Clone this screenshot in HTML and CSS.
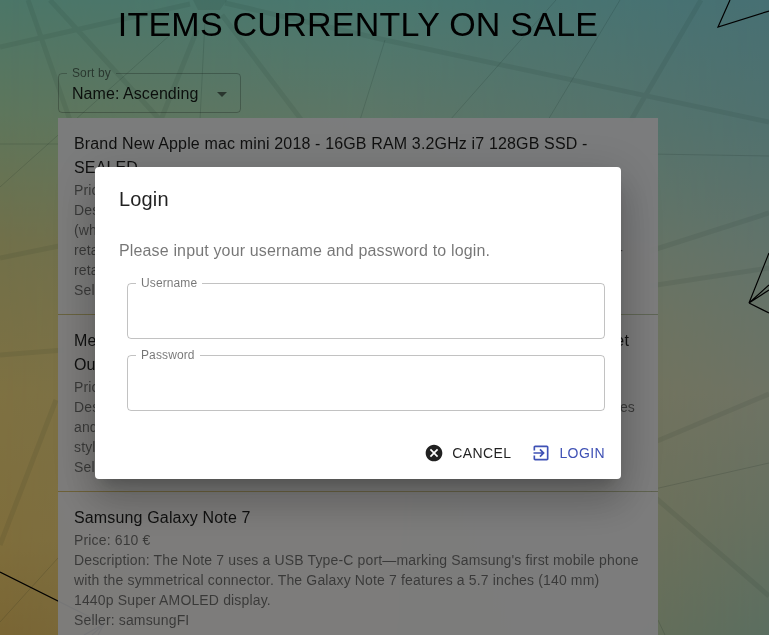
FILE: index.html
```html
<!DOCTYPE html>
<html lang="en">
<head>
<meta charset="utf-8">
<title>Items currently on sale</title>
<link rel="stylesheet" href="styles.css">
</head>
<body>
<svg class="wallpaper" viewBox="0 0 769 635" preserveAspectRatio="none" aria-hidden="true">
  <defs>
    <linearGradient id="west" x2="0" y2="1">
      <stop offset="0" stop-color="#98ecd0"/><stop offset=".18" stop-color="#bcecb8"/>
      <stop offset=".38" stop-color="#e2e094"/><stop offset=".62" stop-color="#fce284"/>
      <stop offset=".85" stop-color="#fedc78"/><stop offset="1" stop-color="#f4cc68"/>
    </linearGradient>
    <linearGradient id="middle" x2="0" y2="1">
      <stop offset="0" stop-color="#92f0e0"/><stop offset=".2" stop-color="#bceccc"/>
      <stop offset=".5" stop-color="#f0e8a8"/><stop offset="1" stop-color="#f0dc98"/>
    </linearGradient>
    <linearGradient id="east" x2="0" y2="1">
      <stop offset="0" stop-color="#8edfe6"/><stop offset=".2" stop-color="#a2e2dc"/>
      <stop offset=".4" stop-color="#c4e6d4"/><stop offset=".62" stop-color="#dce6c8"/>
      <stop offset=".82" stop-color="#cce0c0"/><stop offset="1" stop-color="#b6dcc0"/>
    </linearGradient>
    <linearGradient id="fadeMiddle"><stop offset="0" stop-color="#000"/><stop offset=".5" stop-color="#fff"/></linearGradient>
    <linearGradient id="fadeEast"><stop offset=".5" stop-color="#000"/><stop offset="1" stop-color="#fff"/></linearGradient>
    <mask id="maskMiddle"><rect width="769" height="635" fill="url(#fadeMiddle)"/></mask>
    <mask id="maskEast"><rect width="769" height="635" fill="url(#fadeEast)"/></mask>
  </defs>
  <rect width="769" height="635" fill="url(#west)"/>
  <rect width="769" height="635" fill="url(#middle)" mask="url(#maskMiddle)"/>
  <rect width="769" height="635" fill="url(#east)" mask="url(#maskEast)"/>
  <g class="beams">
    <path d="M0 47 190 4M28 0 72 126M50 0 162 122M197 30 160 122M222 15 303 122M225 3 385 40 769 122M701 0 630 122M650 251 769 213M650 286 769 268M0 258 64 245M0 355 64 350M56 400 0 545M650 444 769 394M650 493 769 596"/>
    <path class="hub" d="M193 0h34l-7 10h-22z"/>
  </g>
  <path class="threads" d="M556 0 450 120M620 0 548 120M205 20 200 120M170 35 0 187M385 40 360 120M58 558 0 622M650 490 769 463M650 154 769 156M0 144H60M658 620 665 635"/>
  <path class="wires" d="M769 11 718 27 730 0M769 253 749 303 769 285M749 303 769 290M749 303 769 313M0 572 104 624 84 635M104 624 92 635M104 624 98 635"/>
</svg>

<main class="page">
  <h1 class="heading">ITEMS CURRENTLY ON SALE</h1>
  <fieldset class="field sort">
    <legend>Sort by</legend>
    <div class="sort-value"><span>Name: Ascending</span><svg class="caret" viewBox="0 0 10 5"><path d="M0 0h10L5 5z"/></svg></div>
  </fieldset>
  <ul class="items">
    <li class="item">
      <div class="name">Brand New Apple mac mini 2018 - 16GB RAM 3.2GHz i7 128GB SSD -<br>SEALED</div>
      <div class="line">Price:</div>
      <div class="line">Des</div>
      <div class="line">(wh</div>
      <div class="line split"><span>reta</span><span class="tail-dash">-</span></div>
      <div class="line">reta</div>
      <div class="line">Seller:</div>
    </li>
    <li class="item">
      <div class="name split"><span>Me</span><span class="tail-name">et</span></div>
      <div class="name">Ou</div>
      <div class="line">Price:</div>
      <div class="line split"><span>Des</span><span class="tail-text">es</span></div>
      <div class="line">and</div>
      <div class="line">styl</div>
      <div class="line">Seller:</div>
    </li>
    <li class="item">
      <div class="name">Samsung Galaxy Note 7</div>
      <div class="line">Price: 610 €</div>
      <div class="line">Description: The Note 7 uses a USB Type-C port—marking Samsung's first mobile phone</div>
      <div class="line">with the symmetrical connector. The Galaxy Note 7 features a 5.7 inches (140 mm)</div>
      <div class="line">1440p Super AMOLED display.</div>
      <div class="line">Seller: samsungFI</div>
    </li>
  </ul>
</main>

<div class="backdrop">
  <section class="dialog" role="dialog">
    <h2 class="title">Login</h2>
    <p class="prompt">Please input your username and password to login.</p>
    <div class="inputs">
      <fieldset class="field"><legend>Username</legend></fieldset>
      <fieldset class="field"><legend>Password</legend></fieldset>
    </div>
    <div class="actions">
      <button class="button"><svg viewBox="0 0 24 24"><path d="M12 2C6.47 2 2 6.47 2 12s4.47 10 10 10 10-4.47 10-10S17.53 2 12 2zm5 13.59L15.59 17 12 13.41 8.41 17 7 15.59 10.59 12 7 8.41 8.41 7 12 10.59 15.59 7 17 8.41 13.41 12 17 15.59z"/></svg>CANCEL</button>
      <button class="button primary"><svg viewBox="0 0 24 24"><path d="M10.09 15.59L11.5 17l5-5-5-5-1.41 1.41L12.67 11H3v2h9.67l-2.58 2.59zM19 3H5c-1.11 0-2 .9-2 2v4h2V5h14v14H5v-4H3v4c0 1.1.89 2 2 2h14c1.1 0 2-.9 2-2V5c0-1.1-.9-2-2-2z"/></svg>LOGIN</button>
    </div>
  </section>
</div>
</body>
</html>
```
FILE: styles.css
```css
* { box-sizing: border-box; }
html, body { height: 100%; }
body {
  margin: 0;
  overflow: hidden;
  font-family: "Liberation Sans", Arial, sans-serif;
  color: rgba(0, 0, 0, .87);
}
.wallpaper { position: fixed; inset: 0; width: 100%; height: 100%; z-index: -1; }
.beams path { fill: none; stroke: rgba(0, 40, 30, .07); stroke-width: 5; }
.beams .hub { fill: rgba(0, 40, 30, .08); stroke: none; }
.threads { fill: none; stroke: rgba(0, 40, 30, .13); stroke-width: 1; }
.wires { fill: none; stroke: #000; stroke-width: 1.2; }

.page { width: 600px; margin-left: 58px; padding-top: 3px; }
.heading {
  margin: 0 0 22px;
  font-size: 34px;
  font-weight: 400;
  line-height: 42px;
  letter-spacing: .00735em;
  text-align: center;
  white-space: nowrap;
  color: #000;
}
.field {
  margin: 0;
  padding: 0 8px;
  border: 1px solid rgba(0, 0, 0, .24);
  border-radius: 4px;
  height: 62px;
  min-width: 0;
}
.field legend {
  padding: 0 5px;
  font-size: 12px;
  line-height: 12px;
  letter-spacing: .00938em;
  color: rgba(0, 0, 0, .54);
}
.sort { width: 183px; height: 46px; margin-bottom: 5px; }
.sort legend { letter-spacing: .01em; }
.sort-value {
  display: flex;
  justify-content: space-between;
  align-items: center;
  height: 30px;
  padding: 0 5px;
  font-size: 16px;
  letter-spacing: .004em;
  white-space: nowrap;
}
.caret { width: 10px; height: 5px; fill: rgba(0, 0, 0, .54); }

.items { margin: 0; padding: 0; list-style: none; }
.item {
  padding: 14px 16px;
  background: rgba(250, 250, 252, .95);
  background-clip: padding-box;
  border-bottom: 1px solid rgba(0, 0, 0, .12);
}
.name { font-size: 16px; line-height: 24px; letter-spacing: .00938em; white-space: nowrap; }
.line {
  font-size: 14px;
  line-height: 20px;
  letter-spacing: .01071em;
  color: rgba(0, 0, 0, .54);
  white-space: nowrap;
}
.split { display: flex; justify-content: space-between; }
.tail-dash { margin-right: 19px; }
.tail-name { margin-right: 13px; }
.tail-text { margin-right: 7px; }

.backdrop {
  position: fixed;
  inset: 0;
  padding: 167px 148px 0 95px;
  background: rgba(0, 0, 0, .5);
}
.dialog {
  height: 312px;
  background: #fff;
  border-radius: 4px;
  box-shadow: 0 11px 15px -7px rgba(0, 0, 0, .2), 0 24px 38px 3px rgba(0, 0, 0, .14), 0 9px 46px 8px rgba(0, 0, 0, .12);
}
.title {
  margin: 0;
  padding: 16px 24px;
  font-size: 20px;
  font-weight: 400;
  line-height: 32px;
  letter-spacing: .0075em;
}
.prompt {
  margin: 0;
  padding: 8px 24px;
  font-size: 16px;
  line-height: 24px;
  letter-spacing: .00938em;
  color: rgba(0, 0, 0, .54);
}
.inputs { display: grid; gap: 10px; padding: 6px 16px 0 32px; }
.actions { display: flex; justify-content: flex-end; gap: 20px; padding: 24px 16px 0; }
.button {
  display: flex;
  align-items: center;
  gap: 8px;
  height: 36px;
  padding: 0;
  border: 0;
  background: none;
  font-family: inherit;
  font-size: 14px;
  letter-spacing: .02857em;
  color: rgba(0, 0, 0, .87);
}
.button svg { width: 20px; height: 20px; fill: currentColor; }
.primary { color: #3f51b5; }
```
